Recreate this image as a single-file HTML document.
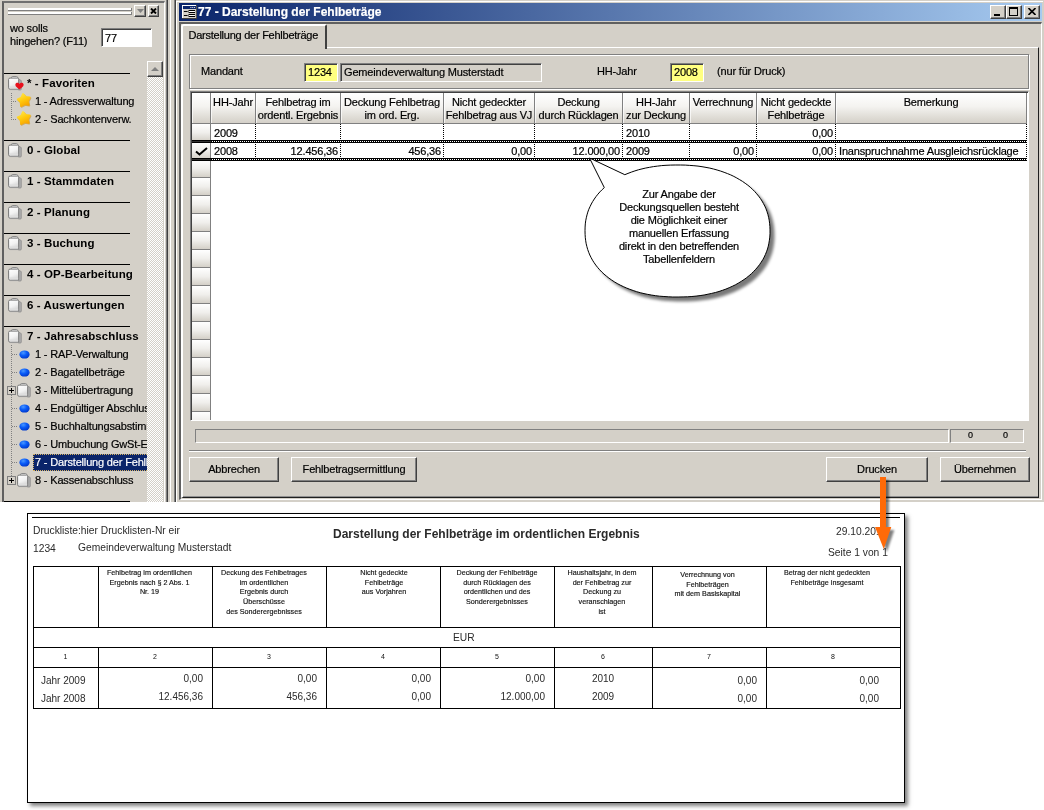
<!DOCTYPE html><html lang="de"><head><meta charset="utf-8"><title>77 - Darstellung der Fehlbeträge</title><style>
*{box-sizing:border-box;margin:0;padding:0}
html,body{width:1044px;height:810px;overflow:hidden;background:#fff}
body{position:relative;font-family:"Liberation Sans",Arial,sans-serif;font-size:11px;color:#000;letter-spacing:-0.17px;line-height:13px;-webkit-text-stroke-width:0.2px}
.a{position:absolute}
.t{position:absolute;white-space:nowrap}
#app{left:0;top:0;width:1044px;height:502px;background:#d4d0c8}
#lay{left:0;top:0;width:1044px;height:810px;will-change:transform}
#clip{left:0;top:0;width:1044px;height:502px;overflow:hidden}
.hl{position:absolute;height:1px;background:#000;left:4px;width:126px}
.sec{position:absolute;left:27px;-webkit-text-stroke-width:0;font-weight:bold;font-size:11.5px;letter-spacing:0.1px;white-space:nowrap}
.it{position:absolute;left:36px;white-space:nowrap;margin-left:-1px}
.btn{position:absolute;background:#d4d0c8;border:1px solid;border-color:#fff #404040 #404040 #fff;box-shadow:inset -1px -1px 0 #808080;text-align:center}
.sunk{position:absolute;border:1px solid;border-color:#808080 #fff #fff #808080}
.sunk2{position:absolute;border:1px solid;border-color:#808080 #fff #fff #808080;box-shadow:inset 1px 1px 0 #404040}
.hd{position:absolute;top:93px;height:31px;background:linear-gradient(#fff 0%,#f4f3f0 45%,#d4d0c8 100%);border-right:1px solid #808080;border-bottom:1px solid #808080;box-shadow:inset 1px 0 0 rgba(255,255,255,.7);text-align:center;line-height:13px;padding-top:3px;white-space:nowrap;overflow:hidden}
.rs{position:absolute;left:192px;width:19px;height:18px;background:linear-gradient(#fff 0%,#f0efec 50%,#d4d0c8 100%);border-right:1px solid #808080;border-bottom:1px solid #808080}
.c{position:absolute;height:17px;line-height:18px;white-space:nowrap;overflow:hidden;border-right:1px dotted #000}
.r{text-align:right;padding-right:2px}
.l{text-align:left;padding-left:3px}
.pv{font-family:"Liberation Sans",Arial,sans-serif;letter-spacing:0;color:#2a2a2a;-webkit-text-stroke-width:0}
.ph{position:absolute;text-align:center;font-size:7.2px;line-height:9.7px;letter-spacing:0;color:#111;white-space:nowrap;-webkit-text-stroke:0.15px #111}
.pn{position:absolute;text-align:center;font-size:7px;letter-spacing:0;color:#111;-webkit-text-stroke-width:0}
.pd{position:absolute;font-size:10px;letter-spacing:0;color:#2a2a2a;-webkit-text-stroke-width:0;white-space:nowrap}
.vl{position:absolute;width:1px;background:#000}
.hz{position:absolute;height:1px;background:#000}
</style></head><body>
<div id="app" class="a"></div>
<div id="lay" class="a"><div id="clip" class="a">
<div class="a" style="left:2px;top:1px;height:503px;border-left:2px solid #606060;border-top:2px solid #707070;border-right:1px solid #fff;width:163px"></div>
<div class="a" style="left:8px;top:8px;width:124px;height:3px;background:#fff;border-bottom:1px solid #808080;border-right:1px solid #808080"></div>
<div class="a" style="left:8px;top:12px;width:124px;height:3px;background:#fff;border-bottom:1px solid #808080;border-right:1px solid #808080"></div>
<div class="btn" style="left:134px;top:5px;width:12px;height:12px"><svg class="a" style="left:2px;top:3px" width="7" height="4"><path d="M0 0H7L3.5 4Z" fill="#808080"/></svg></div>
<div class="btn" style="left:148px;top:5px;width:11px;height:12px"><svg class="a" style="left:1px;top:2px" width="7" height="6"><path d="M1 0.5L6 5.5M6 0.5L1 5.5" stroke="#000" stroke-width="1.9"/></svg></div>
<div class="t" style="left:10px;top:22px">wo solls</div>
<div class="t" style="left:10px;top:35px">hingehen? (F11)</div>
<div class="sunk2" style="left:101px;top:28px;width:51px;height:19px;background:#fff"></div>
<div class="t" style="left:105px;top:32px">77</div>
<div class="a" style="left:147px;top:76px;width:16px;height:426px;background:repeating-conic-gradient(#fff 0 25%,#d4d0c8 0 50%) 0 0/2px 2px"></div>
<div class="btn" style="left:147px;top:61px;width:16px;height:16px"><svg class="a" style="left:3px;top:5px" width="8" height="4"><path d="M0 4H8L4 0Z" fill="#808080"/></svg></div>
<div class="a" style="left:4px;top:60px;width:143px;height:442px;overflow:hidden">
<div class="hl" style="left:0;top:13px"></div>
<div class="hl" style="left:0;top:80px"></div>
<div class="hl" style="left:0;top:111px"></div>
<div class="hl" style="left:0;top:142px"></div>
<div class="hl" style="left:0;top:173px"></div>
<div class="hl" style="left:0;top:204px"></div>
<div class="hl" style="left:0;top:235px"></div>
<div class="hl" style="left:0;top:266px"></div>
<div class="hl" style="left:0;top:441px"></div>
<svg class="a" style="left:3.5px;top:15.700000000000003px" width="14" height="15" viewBox="0 0 14 15"><defs><linearGradient id="fg" x1="0" y1="0" x2="0.4" y2="1"><stop offset="0" stop-color="#ffffff"/><stop offset="0.6" stop-color="#f2f2f2"/><stop offset="1" stop-color="#d6d6d6"/></linearGradient></defs><path d="M3.6 2.6V1.4Q3.6 0.5 4.5 0.5H8.6Q9.5 0.5 9.7 1.4L10 2.6Z" fill="#f0f0f0" stroke="#808080" stroke-width="0.9"/><path d="M10.4 3L13.3 4.6V13Q13.3 14 12.3 14H10.4Z" fill="#aeaeae" stroke="#858585" stroke-width="0.7"/><path d="M2 2.1H9.6Q10.7 2.1 10.7 3.2V13.2H2.2Q0.6 13.2 0.6 11.8V3.4Q0.6 2.1 2 2.1Z" fill="url(#fg)" stroke="#787878" stroke-width="1"/><path d="M1.3 10.5V11.8Q1.3 12.6 2.2 12.6H10.1V10.5Z" fill="#dedede"/><path d="M2.2 13.6H10.6" stroke="#9a9a9a" stroke-width="0.8"/></svg>
<div class="sec" style="left:23px;top:16.5px">* - Favoriten</div>
<svg class="a" style="left:3.5px;top:82.69999999999999px" width="14" height="15" viewBox="0 0 14 15"><defs><linearGradient id="fg" x1="0" y1="0" x2="0.4" y2="1"><stop offset="0" stop-color="#ffffff"/><stop offset="0.6" stop-color="#f2f2f2"/><stop offset="1" stop-color="#d6d6d6"/></linearGradient></defs><path d="M3.6 2.6V1.4Q3.6 0.5 4.5 0.5H8.6Q9.5 0.5 9.7 1.4L10 2.6Z" fill="#f0f0f0" stroke="#808080" stroke-width="0.9"/><path d="M10.4 3L13.3 4.6V13Q13.3 14 12.3 14H10.4Z" fill="#aeaeae" stroke="#858585" stroke-width="0.7"/><path d="M2 2.1H9.6Q10.7 2.1 10.7 3.2V13.2H2.2Q0.6 13.2 0.6 11.8V3.4Q0.6 2.1 2 2.1Z" fill="url(#fg)" stroke="#787878" stroke-width="1"/><path d="M1.3 10.5V11.8Q1.3 12.6 2.2 12.6H10.1V10.5Z" fill="#dedede"/><path d="M2.2 13.6H10.6" stroke="#9a9a9a" stroke-width="0.8"/></svg>
<div class="sec" style="left:23px;top:83.5px">0 - Global</div>
<svg class="a" style="left:3.5px;top:113.69999999999999px" width="14" height="15" viewBox="0 0 14 15"><defs><linearGradient id="fg" x1="0" y1="0" x2="0.4" y2="1"><stop offset="0" stop-color="#ffffff"/><stop offset="0.6" stop-color="#f2f2f2"/><stop offset="1" stop-color="#d6d6d6"/></linearGradient></defs><path d="M3.6 2.6V1.4Q3.6 0.5 4.5 0.5H8.6Q9.5 0.5 9.7 1.4L10 2.6Z" fill="#f0f0f0" stroke="#808080" stroke-width="0.9"/><path d="M10.4 3L13.3 4.6V13Q13.3 14 12.3 14H10.4Z" fill="#aeaeae" stroke="#858585" stroke-width="0.7"/><path d="M2 2.1H9.6Q10.7 2.1 10.7 3.2V13.2H2.2Q0.6 13.2 0.6 11.8V3.4Q0.6 2.1 2 2.1Z" fill="url(#fg)" stroke="#787878" stroke-width="1"/><path d="M1.3 10.5V11.8Q1.3 12.6 2.2 12.6H10.1V10.5Z" fill="#dedede"/><path d="M2.2 13.6H10.6" stroke="#9a9a9a" stroke-width="0.8"/></svg>
<div class="sec" style="left:23px;top:114.5px">1 - Stammdaten</div>
<svg class="a" style="left:3.5px;top:144.7px" width="14" height="15" viewBox="0 0 14 15"><defs><linearGradient id="fg" x1="0" y1="0" x2="0.4" y2="1"><stop offset="0" stop-color="#ffffff"/><stop offset="0.6" stop-color="#f2f2f2"/><stop offset="1" stop-color="#d6d6d6"/></linearGradient></defs><path d="M3.6 2.6V1.4Q3.6 0.5 4.5 0.5H8.6Q9.5 0.5 9.7 1.4L10 2.6Z" fill="#f0f0f0" stroke="#808080" stroke-width="0.9"/><path d="M10.4 3L13.3 4.6V13Q13.3 14 12.3 14H10.4Z" fill="#aeaeae" stroke="#858585" stroke-width="0.7"/><path d="M2 2.1H9.6Q10.7 2.1 10.7 3.2V13.2H2.2Q0.6 13.2 0.6 11.8V3.4Q0.6 2.1 2 2.1Z" fill="url(#fg)" stroke="#787878" stroke-width="1"/><path d="M1.3 10.5V11.8Q1.3 12.6 2.2 12.6H10.1V10.5Z" fill="#dedede"/><path d="M2.2 13.6H10.6" stroke="#9a9a9a" stroke-width="0.8"/></svg>
<div class="sec" style="left:23px;top:145.5px">2 - Planung</div>
<svg class="a" style="left:3.5px;top:175.7px" width="14" height="15" viewBox="0 0 14 15"><defs><linearGradient id="fg" x1="0" y1="0" x2="0.4" y2="1"><stop offset="0" stop-color="#ffffff"/><stop offset="0.6" stop-color="#f2f2f2"/><stop offset="1" stop-color="#d6d6d6"/></linearGradient></defs><path d="M3.6 2.6V1.4Q3.6 0.5 4.5 0.5H8.6Q9.5 0.5 9.7 1.4L10 2.6Z" fill="#f0f0f0" stroke="#808080" stroke-width="0.9"/><path d="M10.4 3L13.3 4.6V13Q13.3 14 12.3 14H10.4Z" fill="#aeaeae" stroke="#858585" stroke-width="0.7"/><path d="M2 2.1H9.6Q10.7 2.1 10.7 3.2V13.2H2.2Q0.6 13.2 0.6 11.8V3.4Q0.6 2.1 2 2.1Z" fill="url(#fg)" stroke="#787878" stroke-width="1"/><path d="M1.3 10.5V11.8Q1.3 12.6 2.2 12.6H10.1V10.5Z" fill="#dedede"/><path d="M2.2 13.6H10.6" stroke="#9a9a9a" stroke-width="0.8"/></svg>
<div class="sec" style="left:23px;top:176.5px">3 - Buchung</div>
<svg class="a" style="left:3.5px;top:206.7px" width="14" height="15" viewBox="0 0 14 15"><defs><linearGradient id="fg" x1="0" y1="0" x2="0.4" y2="1"><stop offset="0" stop-color="#ffffff"/><stop offset="0.6" stop-color="#f2f2f2"/><stop offset="1" stop-color="#d6d6d6"/></linearGradient></defs><path d="M3.6 2.6V1.4Q3.6 0.5 4.5 0.5H8.6Q9.5 0.5 9.7 1.4L10 2.6Z" fill="#f0f0f0" stroke="#808080" stroke-width="0.9"/><path d="M10.4 3L13.3 4.6V13Q13.3 14 12.3 14H10.4Z" fill="#aeaeae" stroke="#858585" stroke-width="0.7"/><path d="M2 2.1H9.6Q10.7 2.1 10.7 3.2V13.2H2.2Q0.6 13.2 0.6 11.8V3.4Q0.6 2.1 2 2.1Z" fill="url(#fg)" stroke="#787878" stroke-width="1"/><path d="M1.3 10.5V11.8Q1.3 12.6 2.2 12.6H10.1V10.5Z" fill="#dedede"/><path d="M2.2 13.6H10.6" stroke="#9a9a9a" stroke-width="0.8"/></svg>
<div class="sec" style="left:23px;top:207.5px">4 - OP-Bearbeitung</div>
<svg class="a" style="left:3.5px;top:237.7px" width="14" height="15" viewBox="0 0 14 15"><defs><linearGradient id="fg" x1="0" y1="0" x2="0.4" y2="1"><stop offset="0" stop-color="#ffffff"/><stop offset="0.6" stop-color="#f2f2f2"/><stop offset="1" stop-color="#d6d6d6"/></linearGradient></defs><path d="M3.6 2.6V1.4Q3.6 0.5 4.5 0.5H8.6Q9.5 0.5 9.7 1.4L10 2.6Z" fill="#f0f0f0" stroke="#808080" stroke-width="0.9"/><path d="M10.4 3L13.3 4.6V13Q13.3 14 12.3 14H10.4Z" fill="#aeaeae" stroke="#858585" stroke-width="0.7"/><path d="M2 2.1H9.6Q10.7 2.1 10.7 3.2V13.2H2.2Q0.6 13.2 0.6 11.8V3.4Q0.6 2.1 2 2.1Z" fill="url(#fg)" stroke="#787878" stroke-width="1"/><path d="M1.3 10.5V11.8Q1.3 12.6 2.2 12.6H10.1V10.5Z" fill="#dedede"/><path d="M2.2 13.6H10.6" stroke="#9a9a9a" stroke-width="0.8"/></svg>
<div class="sec" style="left:23px;top:238.5px">6 - Auswertungen</div>
<svg class="a" style="left:3.5px;top:268.7px" width="14" height="15" viewBox="0 0 14 15"><defs><linearGradient id="fg" x1="0" y1="0" x2="0.4" y2="1"><stop offset="0" stop-color="#ffffff"/><stop offset="0.6" stop-color="#f2f2f2"/><stop offset="1" stop-color="#d6d6d6"/></linearGradient></defs><path d="M3.6 2.6V1.4Q3.6 0.5 4.5 0.5H8.6Q9.5 0.5 9.7 1.4L10 2.6Z" fill="#f0f0f0" stroke="#808080" stroke-width="0.9"/><path d="M10.4 3L13.3 4.6V13Q13.3 14 12.3 14H10.4Z" fill="#aeaeae" stroke="#858585" stroke-width="0.7"/><path d="M2 2.1H9.6Q10.7 2.1 10.7 3.2V13.2H2.2Q0.6 13.2 0.6 11.8V3.4Q0.6 2.1 2 2.1Z" fill="url(#fg)" stroke="#787878" stroke-width="1"/><path d="M1.3 10.5V11.8Q1.3 12.6 2.2 12.6H10.1V10.5Z" fill="#dedede"/><path d="M2.2 13.6H10.6" stroke="#9a9a9a" stroke-width="0.8"/></svg>
<div class="sec" style="left:23px;top:269.5px">7 - Jahresabschluss</div>
<svg class="a" style="left:11px;top:22px" width="9" height="8" viewBox="0 0 9 8"><path d="M4.5 7.5C1 5 0 3.5 0.5 2C1 0.5 3.5 0 4.5 2C5.5 0 8 0.5 8.5 2C9 3.5 8 5 4.5 7.5Z" fill="#e8101c"/></svg>
<div class="a" style="left:7px;top:33px;width:1px;height:27px;background:repeating-linear-gradient(#808080 0 1px,transparent 1px 2px)"></div>
<div class="a" style="left:7px;top:41px;width:6px;height:1px;background:repeating-linear-gradient(90deg,#808080 0 1px,transparent 1px 2px)"></div>
<div class="a" style="left:7px;top:59px;width:6px;height:1px;background:repeating-linear-gradient(90deg,#808080 0 1px,transparent 1px 2px)"></div>
<svg class="a" style="left:11.6px;top:32.3px" width="17" height="17" viewBox="0 0 17 17"><defs><linearGradient id="sg" x1="0.2" y1="0" x2="0.7" y2="1"><stop offset="0" stop-color="#ffe544"/><stop offset="0.5" stop-color="#ffc90e"/><stop offset="1" stop-color="#f7a400"/></linearGradient></defs><path d="M7.0 2.1L9.7 5.0L13.6 5.4L11.7 8.9L12.5 12.8L8.6 12.0L5.1 13.9L4.7 10.0L1.8 7.3L5.4 5.7Z" fill="#c98a10" stroke="#c98a10" stroke-width="2" stroke-linejoin="round" opacity=".55" transform="translate(0.7,0.8)"/><path d="M7.0 2.1L9.7 5.0L13.6 5.4L11.7 8.9L12.5 12.8L8.6 12.0L5.1 13.9L4.7 10.0L1.8 7.3L5.4 5.7Z" fill="url(#sg)" stroke="url(#sg)" stroke-width="2" stroke-linejoin="round"/></svg>
<svg class="a" style="left:11.6px;top:50.3px" width="17" height="17" viewBox="0 0 17 17"><defs><linearGradient id="sg" x1="0.2" y1="0" x2="0.7" y2="1"><stop offset="0" stop-color="#ffe544"/><stop offset="0.5" stop-color="#ffc90e"/><stop offset="1" stop-color="#f7a400"/></linearGradient></defs><path d="M7.0 2.1L9.7 5.0L13.6 5.4L11.7 8.9L12.5 12.8L8.6 12.0L5.1 13.9L4.7 10.0L1.8 7.3L5.4 5.7Z" fill="#c98a10" stroke="#c98a10" stroke-width="2" stroke-linejoin="round" opacity=".55" transform="translate(0.7,0.8)"/><path d="M7.0 2.1L9.7 5.0L13.6 5.4L11.7 8.9L12.5 12.8L8.6 12.0L5.1 13.9L4.7 10.0L1.8 7.3L5.4 5.7Z" fill="url(#sg)" stroke="url(#sg)" stroke-width="2" stroke-linejoin="round"/></svg>
<div class="it" style="left:32px;top:35px">1 - Adressverwaltung</div>
<div class="it" style="left:32px;top:53px">2 - Sachkontenverw.</div>
<div class="a" style="left:7px;top:285px;width:1px;height:131px;background:repeating-linear-gradient(#808080 0 1px,transparent 1px 2px)"></div>
<div class="a" style="left:8px;top:294px;width:6px;height:1px;background:repeating-linear-gradient(90deg,#808080 0 1px,transparent 1px 2px)"></div>
<svg class="a" style="left:15px;top:290px" width="11" height="9" viewBox="0 0 11 9"><defs><radialGradient id="dg" cx="0.38" cy="0.3" r="0.75"><stop offset="0" stop-color="#4a98ff"/><stop offset="0.45" stop-color="#0a5cf8"/><stop offset="1" stop-color="#0036c8"/></radialGradient></defs><ellipse cx="5.5" cy="4.5" rx="5.1" ry="4.1" fill="url(#dg)"/></svg>
<div class="it" style="left:32px;top:288px">1 - RAP-Verwaltung</div>
<div class="a" style="left:8px;top:312px;width:6px;height:1px;background:repeating-linear-gradient(90deg,#808080 0 1px,transparent 1px 2px)"></div>
<svg class="a" style="left:15px;top:308px" width="11" height="9" viewBox="0 0 11 9"><defs><radialGradient id="dg" cx="0.38" cy="0.3" r="0.75"><stop offset="0" stop-color="#4a98ff"/><stop offset="0.45" stop-color="#0a5cf8"/><stop offset="1" stop-color="#0036c8"/></radialGradient></defs><ellipse cx="5.5" cy="4.5" rx="5.1" ry="4.1" fill="url(#dg)"/></svg>
<div class="it" style="left:32px;top:306px">2 - Bagatellbeträge</div>
<svg class="a" style="left:3px;top:326px" width="9" height="9" viewBox="0 0 9 9"><rect x="0.5" y="0.5" width="8" height="8" fill="#d4d0c8" stroke="#808080"/><path d="M2 4.5H7M4.5 2V7" stroke="#000"/></svg>
<svg class="a" style="left:13.2px;top:323px" width="14" height="15" viewBox="0 0 14 15"><defs><linearGradient id="fg" x1="0" y1="0" x2="0.4" y2="1"><stop offset="0" stop-color="#ffffff"/><stop offset="0.6" stop-color="#f2f2f2"/><stop offset="1" stop-color="#d6d6d6"/></linearGradient></defs><path d="M3.6 2.6V1.4Q3.6 0.5 4.5 0.5H8.6Q9.5 0.5 9.7 1.4L10 2.6Z" fill="#f0f0f0" stroke="#808080" stroke-width="0.9"/><path d="M10.4 3L13.3 4.6V13Q13.3 14 12.3 14H10.4Z" fill="#aeaeae" stroke="#858585" stroke-width="0.7"/><path d="M2 2.1H9.6Q10.7 2.1 10.7 3.2V13.2H2.2Q0.6 13.2 0.6 11.8V3.4Q0.6 2.1 2 2.1Z" fill="url(#fg)" stroke="#787878" stroke-width="1"/><path d="M1.3 10.5V11.8Q1.3 12.6 2.2 12.6H10.1V10.5Z" fill="#dedede"/><path d="M2.2 13.6H10.6" stroke="#9a9a9a" stroke-width="0.8"/></svg>
<div class="it" style="left:32px;top:324px">3 - Mittelübertragung</div>
<div class="a" style="left:8px;top:348px;width:6px;height:1px;background:repeating-linear-gradient(90deg,#808080 0 1px,transparent 1px 2px)"></div>
<svg class="a" style="left:15px;top:344px" width="11" height="9" viewBox="0 0 11 9"><defs><radialGradient id="dg" cx="0.38" cy="0.3" r="0.75"><stop offset="0" stop-color="#4a98ff"/><stop offset="0.45" stop-color="#0a5cf8"/><stop offset="1" stop-color="#0036c8"/></radialGradient></defs><ellipse cx="5.5" cy="4.5" rx="5.1" ry="4.1" fill="url(#dg)"/></svg>
<div class="it" style="left:32px;top:342px">4 - Endgültiger Abschluss</div>
<div class="a" style="left:8px;top:366px;width:6px;height:1px;background:repeating-linear-gradient(90deg,#808080 0 1px,transparent 1px 2px)"></div>
<svg class="a" style="left:15px;top:362px" width="11" height="9" viewBox="0 0 11 9"><defs><radialGradient id="dg" cx="0.38" cy="0.3" r="0.75"><stop offset="0" stop-color="#4a98ff"/><stop offset="0.45" stop-color="#0a5cf8"/><stop offset="1" stop-color="#0036c8"/></radialGradient></defs><ellipse cx="5.5" cy="4.5" rx="5.1" ry="4.1" fill="url(#dg)"/></svg>
<div class="it" style="left:32px;top:360px">5 - Buchhaltungsabstimmung</div>
<div class="a" style="left:8px;top:384px;width:6px;height:1px;background:repeating-linear-gradient(90deg,#808080 0 1px,transparent 1px 2px)"></div>
<svg class="a" style="left:15px;top:380px" width="11" height="9" viewBox="0 0 11 9"><defs><radialGradient id="dg" cx="0.38" cy="0.3" r="0.75"><stop offset="0" stop-color="#4a98ff"/><stop offset="0.45" stop-color="#0a5cf8"/><stop offset="1" stop-color="#0036c8"/></radialGradient></defs><ellipse cx="5.5" cy="4.5" rx="5.1" ry="4.1" fill="url(#dg)"/></svg>
<div class="it" style="left:32px;top:378px">6 - Umbuchung GwSt-Erst.</div>
<div class="a" style="left:8px;top:402px;width:6px;height:1px;background:repeating-linear-gradient(90deg,#808080 0 1px,transparent 1px 2px)"></div>
<svg class="a" style="left:15px;top:398px" width="11" height="9" viewBox="0 0 11 9"><defs><radialGradient id="dg" cx="0.38" cy="0.3" r="0.75"><stop offset="0" stop-color="#4a98ff"/><stop offset="0.45" stop-color="#0a5cf8"/><stop offset="1" stop-color="#0036c8"/></radialGradient></defs><ellipse cx="5.5" cy="4.5" rx="5.1" ry="4.1" fill="url(#dg)"/></svg>
<div class="a" style="left:29px;top:394px;width:120px;height:17px;background:#0a246a;outline:1px dotted #d4b060;outline-offset:-1px"></div>
<div class="it" style="left:32px;top:396px;color:#fff">7 - Darstellung der Fehlbeträge</div>
<svg class="a" style="left:3px;top:416px" width="9" height="9" viewBox="0 0 9 9"><rect x="0.5" y="0.5" width="8" height="8" fill="#d4d0c8" stroke="#808080"/><path d="M2 4.5H7M4.5 2V7" stroke="#000"/></svg>
<svg class="a" style="left:13.2px;top:413px" width="14" height="15" viewBox="0 0 14 15"><defs><linearGradient id="fg" x1="0" y1="0" x2="0.4" y2="1"><stop offset="0" stop-color="#ffffff"/><stop offset="0.6" stop-color="#f2f2f2"/><stop offset="1" stop-color="#d6d6d6"/></linearGradient></defs><path d="M3.6 2.6V1.4Q3.6 0.5 4.5 0.5H8.6Q9.5 0.5 9.7 1.4L10 2.6Z" fill="#f0f0f0" stroke="#808080" stroke-width="0.9"/><path d="M10.4 3L13.3 4.6V13Q13.3 14 12.3 14H10.4Z" fill="#aeaeae" stroke="#858585" stroke-width="0.7"/><path d="M2 2.1H9.6Q10.7 2.1 10.7 3.2V13.2H2.2Q0.6 13.2 0.6 11.8V3.4Q0.6 2.1 2 2.1Z" fill="url(#fg)" stroke="#787878" stroke-width="1"/><path d="M1.3 10.5V11.8Q1.3 12.6 2.2 12.6H10.1V10.5Z" fill="#dedede"/><path d="M2.2 13.6H10.6" stroke="#9a9a9a" stroke-width="0.8"/></svg>
<div class="it" style="left:32px;top:414px">8 - Kassenabschluss</div>
</div>
<div class="a" style="left:166px;top:0;width:1px;height:502px;background:#808080"></div>
<div class="a" style="left:167px;top:0;width:1px;height:502px;background:#404040"></div>
<div class="a" style="left:170px;top:0;width:1px;height:502px;background:#fff"></div>
<div class="a" style="left:174px;top:0;width:1px;height:502px;background:#808080"></div>
<div class="a" style="left:175px;top:0;width:1px;height:502px;background:#404040"></div>
<div class="a" style="left:176px;top:0;width:1px;height:502px;background:#fff"></div>
<div class="a" style="left:176px;top:0;width:868px;height:502px;border-top:1px solid #d4d0c8"></div>
<div class="a" style="left:177px;top:1px;width:866px;height:500px;border-top:1px solid #fff"></div>
<div class="a" style="left:179px;top:3px;width:863px;height:18px;background:linear-gradient(90deg,#0a246a 0%,#a6caf0 100%)"></div>
<svg class="a" style="left:182px;top:5px" width="15" height="14" viewBox="0 0 16 14" preserveAspectRatio="none"><rect x="0" y="0" width="16" height="14" fill="#404040"/><rect x="0" y="0" width="15" height="13" fill="#fff"/><rect x="1" y="1" width="14" height="12" fill="#d4d0c8"/><rect x="1" y="1" width="14" height="3" fill="#0a246a"/><path d="M2 6.5H6M2 10.5H6" stroke="#000"/><rect x="7.5" y="5.5" width="6" height="2" fill="#fff" stroke="#000"/><rect x="7.5" y="9.5" width="6" height="2" fill="#fff" stroke="#000"/><path d="M9 2.5H10M11 2.5H12M13 2.5H14" stroke="#fff"/></svg>
<div class="t" style="left:198px;top:5px;color:#fff;font-weight:bold;font-size:12px;letter-spacing:0;line-height:14px">77 - Darstellung der Fehlbeträge</div>
<div class="btn" style="left:990px;top:5px;width:16px;height:14px"><div class="a" style="left:3px;top:8px;width:6px;height:2px;background:#000"></div></div>
<div class="btn" style="left:1006px;top:5px;width:16px;height:14px"><div class="a" style="left:2px;top:1px;width:9px;height:9px;border:1px solid #000;border-top-width:2px"></div></div>
<div class="btn" style="left:1024px;top:5px;width:16px;height:14px"><svg class="a" style="left:3px;top:2px" width="8" height="7"><path d="M0.5 0L7.5 7M7.5 0L0.5 7" stroke="#000" stroke-width="1.6"/></svg></div>
<div class="a" style="left:179px;top:22px;width:863px;height:478px;border-top:2px solid #606060;border-left:2px solid #606060;border-right:1px solid #fff;border-bottom:1px solid #fff"></div>
<div class="a" style="left:181px;top:47px;width:858px;height:451px;border:1px solid;border-color:#fff #202020 #202020 #fff;border-left-width:2px;box-shadow:inset 0 -1px 0 #909090"></div>
<div class="a" style="left:181px;top:24px;width:146px;height:25px;background:#d4d0c8;border-top:2px solid #fff;border-left:2px solid #fff;border-right:2px solid #404040;border-radius:3px 2px 0 0"></div>
<div class="t" style="left:188.5px;top:29px;letter-spacing:-0.25px">Darstellung der Fehlbeträge</div>
<div class="a" style="left:190px;top:55px;width:840px;height:35px;border:1px solid #fff"></div>
<div class="a" style="left:189px;top:54px;width:840px;height:35px;border:1px solid #808080"></div>
<div class="t" style="left:201px;top:65px">Mandant</div>
<div class="sunk2" style="left:304px;top:63px;width:34px;height:19px;background:#ffff80"></div>
<div class="t" style="left:308px;top:66px">1234</div>
<div class="sunk2" style="left:340px;top:63px;width:202px;height:19px"></div>
<div class="t" style="left:344px;top:66px">Gemeindeverwaltung Musterstadt</div>
<div class="t" style="left:597px;top:65px">HH-Jahr</div>
<div class="sunk2" style="left:670px;top:63px;width:34px;height:19px;background:#ffff80"></div>
<div class="t" style="left:674px;top:66px">2008</div>
<div class="t" style="left:717px;top:65px">(nur für Druck)</div>
<div class="sunk2" style="left:190px;top:91px;width:839px;height:330px;background:#fff"></div>
<div class="hd" style="left:192px;width:19px"></div>
<div class="hd" style="left:211px;width:45px">HH-Jahr</div>
<div class="hd" style="left:256px;width:85px">Fehlbetrag im<br>ordentl. Ergebnis</div>
<div class="hd" style="left:341px;width:103px">Deckung Fehlbetrag<br>im ord. Erg.</div>
<div class="hd" style="left:444px;width:91px">Nicht gedeckter<br>Fehlbetrag aus VJ</div>
<div class="hd" style="left:535px;width:88px">Deckung<br>durch Rücklagen</div>
<div class="hd" style="left:623px;width:67px">HH-Jahr<br>zur Deckung</div>
<div class="hd" style="left:690px;width:67px">Verrechnung</div>
<div class="hd" style="left:757px;width:79px">Nicht gedeckte<br>Fehlbeträge</div>
<div class="hd" style="left:836px;width:191px">Bemerkung</div>
<div class="rs" style="top:124px;height:18px"></div>
<div class="rs" style="top:142px;height:18px"><svg class="a" style="left:3px;top:5px" width="13" height="9" viewBox="0 0 13 9"><path d="M1 4.5L4.5 7.5L12 1" fill="none" stroke="#000" stroke-width="2"/></svg></div>
<div class="a" style="left:192px;top:160px;width:19px;height:260px;overflow:hidden">
<div class="rs" style="left:0;top:0px;height:18px"></div>
<div class="rs" style="left:0;top:18px;height:18px"></div>
<div class="rs" style="left:0;top:36px;height:18px"></div>
<div class="rs" style="left:0;top:54px;height:18px"></div>
<div class="rs" style="left:0;top:72px;height:18px"></div>
<div class="rs" style="left:0;top:90px;height:18px"></div>
<div class="rs" style="left:0;top:108px;height:18px"></div>
<div class="rs" style="left:0;top:126px;height:18px"></div>
<div class="rs" style="left:0;top:144px;height:18px"></div>
<div class="rs" style="left:0;top:162px;height:18px"></div>
<div class="rs" style="left:0;top:180px;height:18px"></div>
<div class="rs" style="left:0;top:198px;height:18px"></div>
<div class="rs" style="left:0;top:216px;height:18px"></div>
<div class="rs" style="left:0;top:234px;height:18px"></div>
<div class="rs" style="left:0;top:252px;height:18px"></div>
</div>
<div class="c l" style="left:211px;top:124px;width:45px;height:17px">2009</div>
<div class="c r" style="left:256px;top:124px;width:85px;height:17px"></div>
<div class="c r" style="left:341px;top:124px;width:103px;height:17px"></div>
<div class="c r" style="left:444px;top:124px;width:91px;height:17px"></div>
<div class="c r" style="left:535px;top:124px;width:88px;height:17px"></div>
<div class="c l" style="left:623px;top:124px;width:67px;height:17px">2010</div>
<div class="c r" style="left:690px;top:124px;width:67px;height:17px"></div>
<div class="c r" style="left:757px;top:124px;width:79px;height:17px">0,00</div>
<div class="c l" style="left:836px;top:124px;width:191px;height:17px"></div>
<div class="c l" style="left:211px;top:142px;width:45px;height:17px">2008</div>
<div class="c r" style="left:256px;top:142px;width:85px;height:17px">12.456,36</div>
<div class="c r" style="left:341px;top:142px;width:103px;height:17px">456,36</div>
<div class="c r" style="left:444px;top:142px;width:91px;height:17px">0,00</div>
<div class="c r" style="left:535px;top:142px;width:88px;height:17px">12.000,00</div>
<div class="c l" style="left:623px;top:142px;width:67px;height:17px">2009</div>
<div class="c r" style="left:690px;top:142px;width:67px;height:17px">0,00</div>
<div class="c r" style="left:757px;top:142px;width:79px;height:17px">0,00</div>
<div class="c l" style="left:836px;top:142px;width:191px;height:17px">Inanspruchnahme Ausgleichsrücklage</div>
<div class="a" style="left:192px;top:140px;width:19px;height:3px;background:#333;border-top:1px solid #000;border-bottom:1px solid #000"></div>
<div class="a" style="left:211px;top:140px;width:816px;height:3px;background:repeating-linear-gradient(90deg,#000 0 1px,#fff 1px 2px);border-top:1px solid #000;border-bottom:1px solid #000"></div>
<div class="a" style="left:192px;top:158px;width:19px;height:3px;background:#333;border-top:1px solid #000;border-bottom:1px solid #000"></div>
<div class="a" style="left:211px;top:158px;width:816px;height:3px;background:repeating-linear-gradient(90deg,#000 0 1px,#fff 1px 2px);border-top:1px solid #000;border-bottom:1px solid #000"></div>
<div class="sunk" style="left:195px;top:429px;width:754px;height:14px"></div>
<div class="sunk" style="left:950px;top:429px;width:74px;height:14px"></div>
<div class="t" style="left:968px;top:429px;font-size:9px;letter-spacing:0;line-height:12px">0</div>
<div class="t" style="left:1003px;top:429px;font-size:9px;letter-spacing:0;line-height:12px">0</div>
<div class="a" style="left:189px;top:450px;width:837px;height:2px;border-top:1px solid #808080;border-bottom:1px solid #fff"></div>
<div class="btn" style="left:189px;top:457px;width:90px;height:25px;line-height:22px">Abbrechen</div>
<div class="btn" style="left:291px;top:457px;width:126px;height:25px;line-height:22px">Fehlbetragsermittlung</div>
<div class="btn" style="left:826px;top:457px;width:102px;height:25px;line-height:22px">Drucken</div>
<div class="btn" style="left:940px;top:457px;width:90px;height:25px;line-height:22px">Übernehmen</div>
</div>
<svg class="a" style="left:570px;top:150px" width="220" height="160" viewBox="570 150 220 160"><defs><filter id="bs" x="-10%" y="-10%" width="130%" height="130%"><feGaussianBlur stdDeviation="1.6"/></filter></defs><path id="bp" d="M589.5 158L624.8 174.7L628.0 173.4L631.4 172.1L634.9 170.9L638.4 169.8L642.0 168.9L645.8 168.0L649.6 167.3L653.5 166.6L657.6 166.1L661.7 165.6L666.0 165.3L670.4 165.1L675.2 165.0L680.6 165.0L685.3 165.1L689.7 165.4L693.9 165.7L698.0 166.1L702.0 166.7L706.0 167.4L709.8 168.1L713.5 169.0L717.1 170.0L720.7 171.1L724.1 172.3L727.5 173.6L730.7 174.9L733.8 176.4L736.8 178.0L739.7 179.7L742.5 181.4L745.2 183.3L747.8 185.2L750.2 187.2L752.5 189.3L754.7 191.5L756.7 193.8L758.6 196.1L760.4 198.5L762.0 201.0L763.4 203.5L764.8 206.1L766.0 208.8L767.0 211.6L767.9 214.4L768.6 217.3L769.2 220.2L769.6 223.3L769.9 226.5L770.0 229.9L770.0 233.8L769.8 237.1L769.4 240.2L768.9 243.2L768.3 246.1L767.5 249.0L766.5 251.8L765.4 254.5L764.2 257.1L762.8 259.7L761.2 262.2L759.5 264.7L757.7 267.0L755.7 269.3L753.6 271.5L751.4 273.7L749.1 275.7L746.6 277.7L744.0 279.6L741.2 281.4L738.4 283.1L735.4 284.8L732.3 286.3L729.2 287.7L725.9 289.1L722.5 290.3L719.0 291.5L715.4 292.5L711.7 293.4L708.0 294.2L704.1 295.0L700.1 295.6L696.1 296.1L691.9 296.5L687.6 296.8L683.1 296.9L678.1 297.0L672.8 297.0L668.3 296.8L663.9 296.5L659.7 296.2L655.6 295.7L651.7 295.1L647.8 294.4L644.0 293.6L640.3 292.7L636.7 291.7L633.2 290.5L629.8 289.3L626.5 288.0L623.3 286.6L620.2 285.1L617.2 283.5L614.3 281.8L611.6 280.0L608.9 278.1L606.4 276.1L604.0 274.1L601.8 272.0L599.7 269.8L597.7 267.5L595.8 265.1L594.1 262.7L592.5 260.2L591.1 257.6L589.8 255.0L588.7 252.3L587.7 249.5L586.9 246.7L586.2 243.8L585.7 240.8L585.3 237.7L585.1 234.4L585.0 230.7L585.1 227.1L585.3 223.9L585.7 220.8L586.3 217.8L587.0 214.9L587.8 212.1L588.8 209.3L590.0 206.7L591.3 204.0L592.7 201.5L594.3 199.0L596.0 196.6L597.9 194.2L599.9 191.9L602.1 189.7L604.3 187.6Z" fill="#000" opacity="0.52" transform="translate(4.5,4.5)" filter="url(#bs)"/><path d="M589.5 158L624.8 174.7L628.0 173.4L631.4 172.1L634.9 170.9L638.4 169.8L642.0 168.9L645.8 168.0L649.6 167.3L653.5 166.6L657.6 166.1L661.7 165.6L666.0 165.3L670.4 165.1L675.2 165.0L680.6 165.0L685.3 165.1L689.7 165.4L693.9 165.7L698.0 166.1L702.0 166.7L706.0 167.4L709.8 168.1L713.5 169.0L717.1 170.0L720.7 171.1L724.1 172.3L727.5 173.6L730.7 174.9L733.8 176.4L736.8 178.0L739.7 179.7L742.5 181.4L745.2 183.3L747.8 185.2L750.2 187.2L752.5 189.3L754.7 191.5L756.7 193.8L758.6 196.1L760.4 198.5L762.0 201.0L763.4 203.5L764.8 206.1L766.0 208.8L767.0 211.6L767.9 214.4L768.6 217.3L769.2 220.2L769.6 223.3L769.9 226.5L770.0 229.9L770.0 233.8L769.8 237.1L769.4 240.2L768.9 243.2L768.3 246.1L767.5 249.0L766.5 251.8L765.4 254.5L764.2 257.1L762.8 259.7L761.2 262.2L759.5 264.7L757.7 267.0L755.7 269.3L753.6 271.5L751.4 273.7L749.1 275.7L746.6 277.7L744.0 279.6L741.2 281.4L738.4 283.1L735.4 284.8L732.3 286.3L729.2 287.7L725.9 289.1L722.5 290.3L719.0 291.5L715.4 292.5L711.7 293.4L708.0 294.2L704.1 295.0L700.1 295.6L696.1 296.1L691.9 296.5L687.6 296.8L683.1 296.9L678.1 297.0L672.8 297.0L668.3 296.8L663.9 296.5L659.7 296.2L655.6 295.7L651.7 295.1L647.8 294.4L644.0 293.6L640.3 292.7L636.7 291.7L633.2 290.5L629.8 289.3L626.5 288.0L623.3 286.6L620.2 285.1L617.2 283.5L614.3 281.8L611.6 280.0L608.9 278.1L606.4 276.1L604.0 274.1L601.8 272.0L599.7 269.8L597.7 267.5L595.8 265.1L594.1 262.7L592.5 260.2L591.1 257.6L589.8 255.0L588.7 252.3L587.7 249.5L586.9 246.7L586.2 243.8L585.7 240.8L585.3 237.7L585.1 234.4L585.0 230.7L585.1 227.1L585.3 223.9L585.7 220.8L586.3 217.8L587.0 214.9L587.8 212.1L588.8 209.3L590.0 206.7L591.3 204.0L592.7 201.5L594.3 199.0L596.0 196.6L597.9 194.2L599.9 191.9L602.1 189.7L604.3 187.6Z" fill="#fff" stroke="#000" stroke-width="1"/></svg>
<div class="a" style="left:599px;top:188px;width:160px;text-align:center;line-height:13px">Zur Angabe der<br>Deckungsquellen besteht<br>die Möglichkeit einer<br>manuellen Erfassung<br>direkt in den betreffenden<br>Tabellenfeldern</div>
<div class="a pv" style="left:27px;top:513px;width:878px;height:290px;background:#fff;border:1px solid #000;box-shadow:3px 3px 4px rgba(0,0,0,.5)"></div>
<div class="hz" style="left:32px;top:517px;width:868px"></div>
<div class="t pv" style="left:33px;top:524px;font-size:10.25px">Druckliste:hier Drucklisten-Nr eir</div>
<div class="t pv" style="left:33px;top:542px;font-size:10.25px">1234</div>
<div class="t pv" style="left:78px;top:541px;font-size:10.25px">Gemeindeverwaltung Musterstadt</div>
<div class="t pv" style="left:333px;top:527px;font-size:12px;font-weight:bold;line-height:14px">Darstellung der Fehlbeträge im ordentlichen Ergebnis</div>
<div class="t pv" style="left:836px;top:525px;font-size:10.25px">29.10.2014</div>
<div class="t pv" style="left:828px;top:546px;font-size:10.25px">Seite 1 von 1</div>
<div class="vl" style="left:33px;top:566px;height:61px"></div>
<div class="vl" style="left:33px;top:647px;height:62px"></div>
<div class="vl" style="left:98px;top:566px;height:61px"></div>
<div class="vl" style="left:98px;top:647px;height:62px"></div>
<div class="vl" style="left:212px;top:566px;height:61px"></div>
<div class="vl" style="left:212px;top:647px;height:62px"></div>
<div class="vl" style="left:326px;top:566px;height:61px"></div>
<div class="vl" style="left:326px;top:647px;height:62px"></div>
<div class="vl" style="left:440px;top:566px;height:61px"></div>
<div class="vl" style="left:440px;top:647px;height:62px"></div>
<div class="vl" style="left:554px;top:566px;height:61px"></div>
<div class="vl" style="left:554px;top:647px;height:62px"></div>
<div class="vl" style="left:652px;top:566px;height:61px"></div>
<div class="vl" style="left:652px;top:647px;height:62px"></div>
<div class="vl" style="left:766px;top:566px;height:61px"></div>
<div class="vl" style="left:766px;top:647px;height:62px"></div>
<div class="vl" style="left:900px;top:566px;height:61px"></div>
<div class="vl" style="left:900px;top:647px;height:62px"></div>
<div class="vl" style="left:33px;top:627px;height:21px"></div><div class="vl" style="left:900px;top:627px;height:21px"></div>
<div class="hz" style="left:33px;top:566px;width:868px"></div>
<div class="hz" style="left:33px;top:627px;width:868px"></div>
<div class="hz" style="left:33px;top:647px;width:868px"></div>
<div class="hz" style="left:33px;top:667px;width:868px"></div>
<div class="hz" style="left:33px;top:708px;width:868px"></div>
<div class="ph" style="left:33px;top:568px;width:65px"></div>
<div class="pn" style="left:33px;top:650px;width:65px">1</div>
<div class="ph" style="left:92.5px;top:568px;width:114px">Fehlbetrag im ordentlichen<br>Ergebnis nach § 2 Abs. 1<br>Nr. 19</div>
<div class="pn" style="left:98px;top:650px;width:114px">2</div>
<div class="ph" style="left:207px;top:568px;width:114px">Deckung des Fehlbetrages<br>im ordentlichen<br>Ergebnis durch<br>Überschüsse<br>des Sonderergebnisses</div>
<div class="pn" style="left:212px;top:650px;width:114px">3</div>
<div class="ph" style="left:327px;top:568px;width:114px">Nicht gedeckte<br>Fehlbeträge<br>aus Vorjahren</div>
<div class="pn" style="left:326px;top:650px;width:114px">4</div>
<div class="ph" style="left:440px;top:568px;width:114px">Deckung der Fehlbeträge<br>durch Rücklagen des<br>ordentlichen und des<br>Sonderergebnisses</div>
<div class="pn" style="left:440px;top:650px;width:114px">5</div>
<div class="ph" style="left:553px;top:568px;width:98px">Haushaltsjahr, in dem<br>der Fehlbetrag zur<br>Deckung zu<br>veranschlagen<br>ist</div>
<div class="pn" style="left:554px;top:650px;width:98px">6</div>
<div class="ph" style="left:650.5px;top:570px;width:114px">Verrechnung von<br>Fehlbeträgen<br>mit dem Basiskapital</div>
<div class="pn" style="left:652px;top:650px;width:114px">7</div>
<div class="ph" style="left:760px;top:568px;width:134px">Betrag der nicht gedeckten<br>Fehlbeträge insgesamt</div>
<div class="pn" style="left:766px;top:650px;width:134px">8</div>
<div class="pd" style="left:453px;top:631px;font-size:10.25px">EUR</div>
<div class="pd" style="left:41px;top:674px">Jahr 2009</div>
<div class="pd" style="right:841px;top:672px">0,00</div>
<div class="pd" style="right:727px;top:672px">0,00</div>
<div class="pd" style="right:613px;top:672px">0,00</div>
<div class="pd" style="right:499px;top:672px">0,00</div>
<div class="pd" style="left:554px;width:98px;text-align:center;top:672px">2010</div>
<div class="pd" style="right:287px;top:674px">0,00</div>
<div class="pd" style="right:165px;top:674px">0,00</div>
<div class="pd" style="left:41px;top:692px">Jahr 2008</div>
<div class="pd" style="right:841px;top:690px">12.456,36</div>
<div class="pd" style="right:727px;top:690px">456,36</div>
<div class="pd" style="right:613px;top:690px">0,00</div>
<div class="pd" style="right:499px;top:690px">12.000,00</div>
<div class="pd" style="left:554px;width:98px;text-align:center;top:690px">2009</div>
<div class="pd" style="right:287px;top:692px">0,00</div>
<div class="pd" style="right:165px;top:692px">0,00</div>
<svg class="a" style="left:865px;top:470px" width="40" height="90" viewBox="865 470 40 90"><defs><filter id="as" x="-30%" y="-10%" width="180%" height="130%"><feGaussianBlur stdDeviation="1.2"/></filter></defs><path d="M880 477H886V527H891.3L883.8 549L875 527H880Z" fill="#000" opacity=".5" transform="translate(3,3)" filter="url(#as)"/><path d="M880 477H886V527H891.3L883.8 549L875 527H880Z" fill="#ff6a08"/></svg>
</div>
</body></html>
